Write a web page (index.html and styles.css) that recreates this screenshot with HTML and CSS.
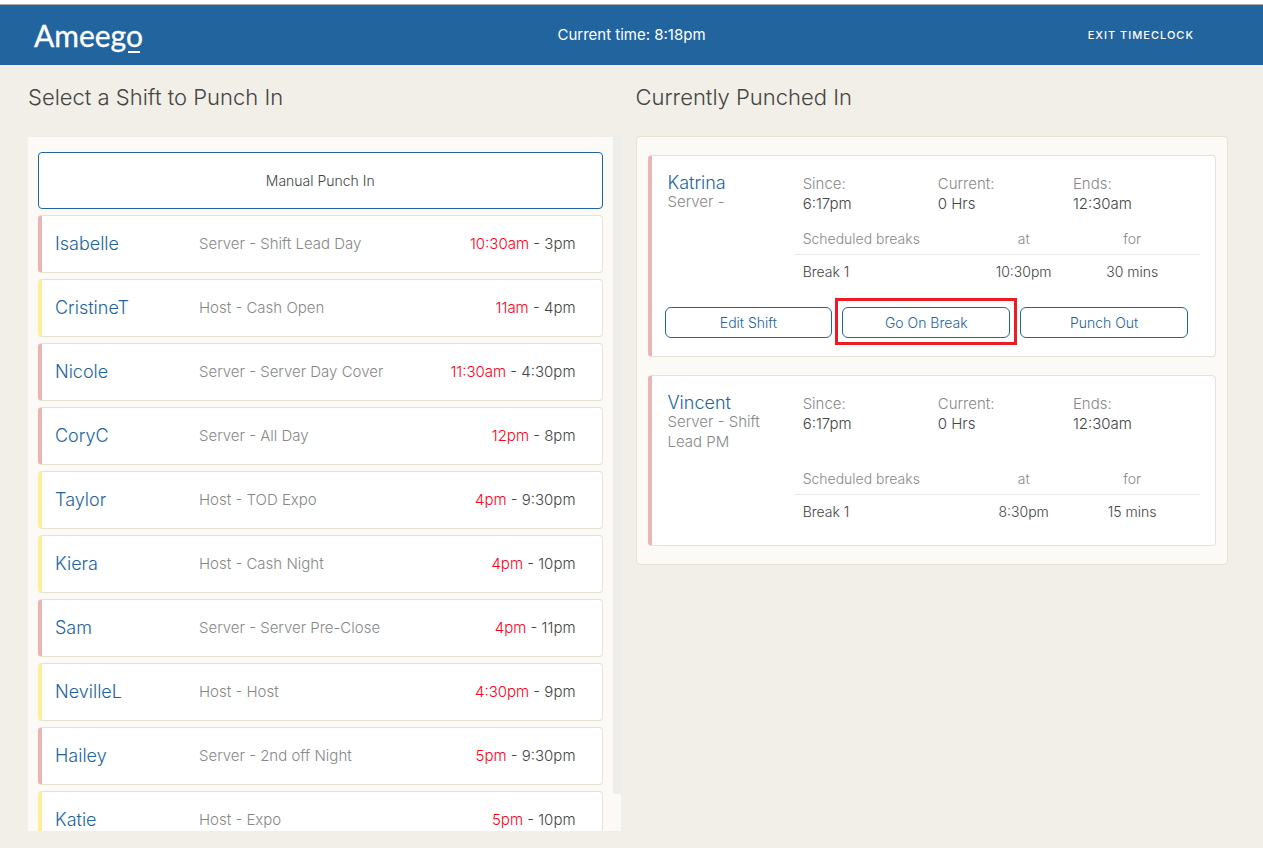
FILE: index.html
```
<!DOCTYPE html>
<html lang="en">
<head>
<meta charset="utf-8">
<title>Ameego Timeclock</title>
<meta name="viewport" content="width=device-width, initial-scale=1">
<link rel="stylesheet" href="styles.css">
</head>
<body>
<header class="topbar">
  <a class="logo" href="#">Ameeg<span class="logo-o">o</span></a>
  <p class="clock">Current time: 8:18pm</p>
  <a class="exit" href="#">EXIT TIMECLOCK</a>
</header>
<main class="columns">
  <section class="column">
    <h1 class="heading">Select a Shift to Punch In</h1>
    <div class="shift-panel">
      <div class="shift-list">
        <button class="manual" type="button">Manual Punch In</button>
        <ul class="shifts">
          <li class="shift server"><a class="name" href="#">Isabelle</a><span class="role">Server - Shift Lead Day</span><span class="time"><span class="late">10:30am</span> - 3pm</span></li>
          <li class="shift host"><a class="name" href="#">CristineT</a><span class="role">Host - Cash Open</span><span class="time"><span class="late">11am</span> - 4pm</span></li>
          <li class="shift server"><a class="name" href="#">Nicole</a><span class="role">Server - Server Day Cover</span><span class="time"><span class="late">11:30am</span> - 4:30pm</span></li>
          <li class="shift server"><a class="name" href="#">CoryC</a><span class="role">Server - All Day</span><span class="time"><span class="late">12pm</span> - 8pm</span></li>
          <li class="shift host"><a class="name" href="#">Taylor</a><span class="role">Host - TOD Expo</span><span class="time"><span class="late">4pm</span> - 9:30pm</span></li>
          <li class="shift host"><a class="name" href="#">Kiera</a><span class="role">Host - Cash Night</span><span class="time"><span class="late">4pm</span> - 10pm</span></li>
          <li class="shift server"><a class="name" href="#">Sam</a><span class="role">Server - Server Pre-Close</span><span class="time"><span class="late">4pm</span> - 11pm</span></li>
          <li class="shift host"><a class="name" href="#">NevilleL</a><span class="role">Host - Host</span><span class="time"><span class="late">4:30pm</span> - 9pm</span></li>
          <li class="shift server"><a class="name" href="#">Hailey</a><span class="role">Server - 2nd off Night</span><span class="time"><span class="late">5pm</span> - 9:30pm</span></li>
          <li class="shift host"><a class="name" href="#">Katie</a><span class="role">Host - Expo</span><span class="time"><span class="late">5pm</span> - 10pm</span></li>
        </ul>
      </div>
      <div class="track"><div class="thumb"></div></div>
    </div>
  </section>
  <section class="column">
    <h2 class="heading">Currently Punched In</h2>
    <div class="punched-panel">
      <article class="card server">
        <div class="summary">
          <div class="person"><a class="name" href="#">Katrina</a><span class="role">Server -</span></div>
          <dl class="fact"><dt>Since:</dt><dd>6:17pm</dd></dl>
          <dl class="fact"><dt>Current:</dt><dd>0 Hrs</dd></dl>
          <dl class="fact"><dt>Ends:</dt><dd>12:30am</dd></dl>
          <table class="breaks">
            <thead><tr><th class="col-break">Scheduled breaks</th><th class="col-at">at</th><th class="col-for">for</th></tr></thead>
            <tbody><tr><td class="col-break">Break 1</td><td class="col-at">10:30pm</td><td class="col-for">30 mins</td></tr></tbody>
          </table>
        </div>
        <div class="actions">
          <button class="action" type="button">Edit Shift</button>
          <button class="action highlighted" type="button">Go On Break</button>
          <button class="action" type="button">Punch Out</button>
        </div>
      </article>
      <article class="card server">
        <div class="summary">
          <div class="person"><a class="name" href="#">Vincent</a><span class="role">Server - Shift Lead PM</span></div>
          <dl class="fact"><dt>Since:</dt><dd>6:17pm</dd></dl>
          <dl class="fact"><dt>Current:</dt><dd>0 Hrs</dd></dl>
          <dl class="fact"><dt>Ends:</dt><dd>12:30am</dd></dl>
          <table class="breaks">
            <thead><tr><th class="col-break">Scheduled breaks</th><th class="col-at">at</th><th class="col-for">for</th></tr></thead>
            <tbody><tr><td class="col-break">Break 1</td><td class="col-at">8:30pm</td><td class="col-for">15 mins</td></tr></tbody>
          </table>
        </div>
      </article>
    </div>
  </section>
</main>
</body>
</html>
```
FILE: styles.css
```
* { box-sizing: border-box; }

body {
  margin: 0;
  height: 100vh;
  display: flex;
  flex-direction: column;
  background: #f2efe8;
  color: #444;
  font-family: Inter, "Open Sans", sans-serif;
  font-weight: 300;
  font-size: 15px;
  line-height: 20px;
}

a { text-decoration: none; }
button { font: inherit; cursor: pointer; }

/* Header */
.topbar {
  flex: none;
  display: grid;
  grid-template-columns: 1fr auto 1fr;
  align-items: center;
  height: 65px;
  padding: 0 34px;
  background: #22649e;
  border-top: 4px solid #fff;
  box-shadow: inset 0 1px #a9abad;
}
.logo {
  justify-self: start;
  color: #fff;
  font-family: Lato, sans-serif;
  font-size: 30px;
  font-weight: 400;
  line-height: 32px;
  -webkit-text-stroke: 0.3px #fff;
}
.logo-o {
  background: linear-gradient(#fff, #fff) center bottom / 12px 2px no-repeat;
}
.clock { margin: 0; color: #fff; font-size: 15px; font-weight: 400; }
.exit {
  justify-self: end;
  margin-right: 35px;
  color: #fff;
  font-size: 11px;
  font-weight: 500;
  letter-spacing: 1px;
}

/* Page columns */
.columns {
  flex: 1;
  min-height: 0;
  display: grid;
  grid-template-columns: 1fr 1fr;
  grid-template-rows: minmax(0, 1fr);
  gap: 15px;
  padding: 20px 35px 17px 28px;
}
.column { display: flex; flex-direction: column; min-height: 0; }
.heading {
  margin: 0 0 27px;
  font-size: 22px;
  font-weight: 300;
  line-height: 24px;
}

.name { color: #22649e; font-size: 18px; }
.role { color: #888; }

/* Shift list */
.shift-panel {
  flex: 1;
  min-height: 0;
  display: flex;
  background: #fbfaf6;
  border-top: 1px solid #efeeeb;
}
.shift-list {
  flex: 1;
  padding: 15px 10px;
  overflow-y: auto;
  scrollbar-width: none;
}
.track { width: 8px; }
.thumb { height: 94.7%; background: #ededea; }
.manual {
  display: block;
  width: 100%;
  height: 57px;
  margin-bottom: 6px;
  background: #fff;
  border: 1px solid #22649e;
  border-radius: 4px;
  color: #444;
  font-size: 14px;
}
.shifts { margin: 0; padding: 0; list-style: none; }
.shift {
  display: grid;
  grid-template-columns: 144px 1fr auto;
  align-items: center;
  height: 58px;
  margin-bottom: 6px;
  padding: 0 26px 0 13px;
  background: #fff;
  border: 1px solid #e8e2d4;
  border-left-width: 4px;
  border-radius: 4px;
}
.late { color: #ff0018; }

/* Punched in */
.punched-panel {
  display: flex;
  flex-direction: column;
  gap: 18px;
  padding: 18px 11px;
  background: #fbfaf6;
  border: 1px solid #e8e2d4;
  border-radius: 4px;
}
.card {
  padding: 18px 0 16px;
  background: #fff;
  border: 1px solid #e8e2d4;
  border-left-width: 4px;
  border-radius: 4px;
}
.summary {
  display: grid;
  grid-template-columns: repeat(4, 1fr);
  padding: 0 15px 0 8px;
}
.person { padding: 0 8px 2px; }
.person .name, .person .role { display: block; }
.person .name { line-height: 18px; }
.fact { margin: 0; padding: 0 8px; }
.fact dt { color: #888; }
.fact dd { margin: 0; }
.breaks {
  grid-column: 2 / -1;
  border-collapse: collapse;
  table-layout: fixed;
  width: 100%;
  font-size: 14px;
  line-height: 18px;
}
.breaks th {
  padding: 16px 0 6px;
  border-bottom: 1px solid #eaeaea;
  color: #888;
  font-weight: 300;
}
.breaks td { padding: 8px 0; text-align: center; }
.breaks .col-break { width: 43%; padding-left: 8px; text-align: left; }
.breaks .col-at { width: 27%; }
.breaks .col-for { padding-right: 14px; }
.actions {
  display: grid;
  grid-template-columns: repeat(3, 1fr);
  gap: 10px;
  padding: 18px 27px 2px 13px;
}
.action {
  position: relative;
  height: 31px;
  padding: 0;
  background: #fff;
  border: 1px solid #22649e;
  border-radius: 6px;
  color: #22649e;
  font-size: 14px;
}
.highlighted::after {
  content: "";
  position: absolute;
  inset: -10px -8px -8px;
  border: 3px solid #ed1c24;
}

/* Department colours on the left edge */
.server { border-left-color: #ebb5b5; }
.host { border-left-color: #ffee99; }
```
